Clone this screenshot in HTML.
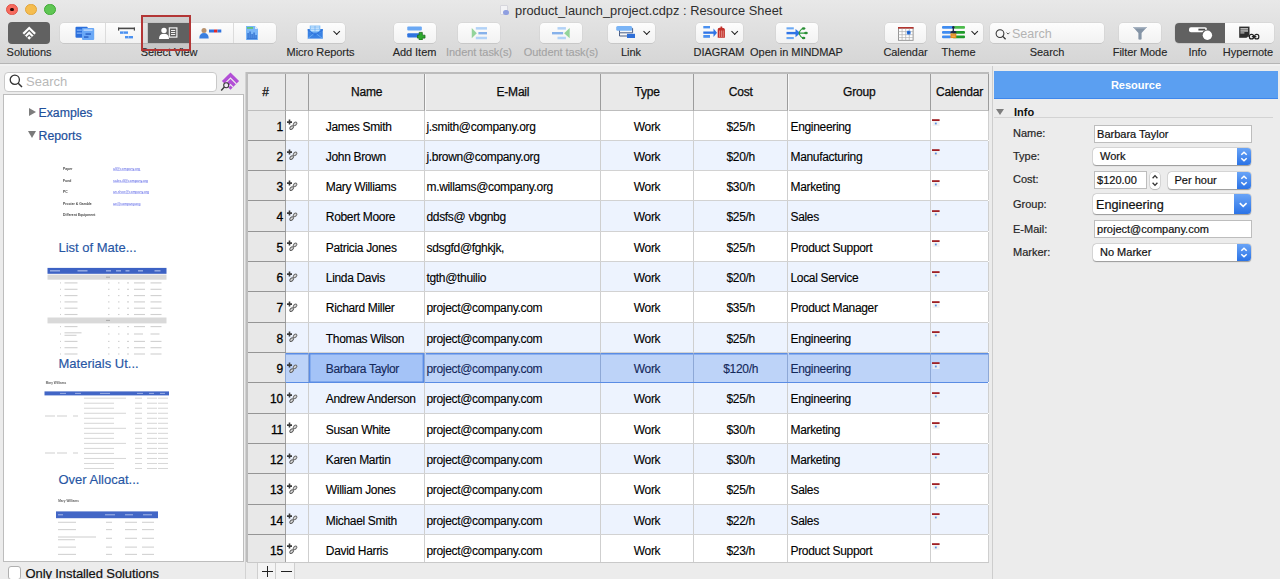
<!DOCTYPE html><html><head><meta charset="utf-8"><style>*{margin:0;padding:0;box-sizing:border-box}
html,body{width:1280px;height:579px;overflow:hidden;background:#ececec}
body{font-family:"Liberation Sans",sans-serif;color:#1e1e1e;position:relative}
.a{position:absolute}
#tb{z-index:5;left:0;top:0;width:1280px;height:63.7px;background:linear-gradient(#e8e8e8,#d6d6d6);border-bottom:1px solid #b5b5b5}
.tl{width:11.8px;height:11.8px;border-radius:50%;top:3.5px}
.title{left:515px;top:2.5px;font-size:12.8px;letter-spacing:0.03px;color:#2e2e2e;white-space:nowrap}
.btn{top:23px;height:20px;background:linear-gradient(#fdfdfd,#f2f2f2);border-radius:4px;box-shadow:0 0.5px 0 #b9b9b9,0 0 0 0.5px #cfcfcf}
.lbl{top:46.3px;font-size:11px;letter-spacing:-0.05px;color:#262626;-webkit-text-stroke:0.12px #262626;white-space:nowrap;transform:translateX(-50%)}
.dis{color:#a3a3a3;-webkit-text-stroke-color:#a3a3a3}
.chev{width:5.4px;height:5.4px;border-right:1.5px solid #222;border-bottom:1.5px solid #222;transform:rotate(45deg)}
.seg{border-left:1px solid #dcdcdc;top:0;height:20px}
/* sidebar */
#sb{left:0;top:63px;width:246px;height:516px;background:#ececec}
.srch{left:4.2px;top:8.6px;width:213px;height:20px;background:#fff;border:1px solid #c9c9c9;border-radius:4px}
.list{left:3px;top:31px;width:241px;height:468px;background:#fff;border:1px solid #bdbdbd}
.tree{font-size:12.3px;color:#22509c;-webkit-text-stroke:0.2px #22509c}
.rep{font-size:13px;color:#2756a4;white-space:nowrap;-webkit-text-stroke:0.15px #2756a4}
.t{position:absolute;height:1.2px;background:#777}
.tb2{position:absolute;height:1.2px;background:#5b72d8}
/* table */
#tbl{left:247px;top:72px;width:742px;height:492px;background:#fff;overflow:hidden}
.hd{-webkit-text-stroke:0.25px #000;top:0;height:38.6px;background:#e9e9e9;border-right:1.2px solid #9c9c9c;box-shadow:1px 0 0 #f8f8f8;border-bottom:1.5px solid #bdbdbd;font-size:12px;letter-spacing:-0.2px;text-align:center;line-height:40px;color:#111}
.row{left:0;width:742px;height:30.32px;border-bottom:1.2px solid #d2d2d2;font-size:12px;letter-spacing:-0.33px;color:#000;-webkit-text-stroke:0.12px #000}
.row.ev{background:#edf3fe}
.row.sel{background:#bdd3f8;border-bottom:1.4px solid #5a8ce4;color:#14285a;-webkit-text-stroke-color:#14285a}
.sel .c{box-shadow:inset 0 1.4px 0 #5a8ce4;border-right-color:#8ea8d6}
.sel .c.num{box-shadow:0 1.2px 0 #959595;color:#000;-webkit-text-stroke-color:#000}
.pre .c{border-bottom:0}
.c{top:0;height:100%;border-right:1.5px solid #cfcfcf;line-height:32.5px;white-space:nowrap}
.num{background:#e8e8e8;text-align:right;padding-right:2px;border-right:1.2px solid #a0a0a0;box-shadow:0 1.2px 0 #959595;-webkit-text-stroke:0.3px #000}
.ctr{text-align:center}
/* right panel */
#rp{left:992px;top:63px;width:288px;height:516px;background:#ececec;border-left:1px solid #cdcdcd}
.fl{font-size:11px;color:#262626;left:20px;white-space:nowrap;-webkit-text-stroke:0.2px #262626}
.fld{left:100.6px;width:158px;height:18px;background:#fff;border:1px solid #bdbdbd;font-size:11px;padding-left:2.5px;line-height:16px;color:#111;-webkit-text-stroke:0.2px #111}
.pop{left:100px;width:157.5px;height:17px;background:#fff;border-radius:3.5px;box-shadow:0 0.5px 1px #9a9a9a,0 0 0 0.5px #c9c9c9;font-size:11px;padding-left:7px;line-height:17px;color:#111;-webkit-text-stroke:0.2px #111}
.pbtn{right:0;top:0;width:14px;height:17px;background:linear-gradient(#69a4f7,#2b73e6);border-radius:0 3.5px 3.5px 0}
</style></head><body><div id="tb" class="a"><div class="a tl" style="left:6px;background:#f76b5e;border:0.6px solid #e0544a"></div><div class="a" style="left:10.3px;top:7.5px;width:3.3px;height:3.3px;border-radius:50%;background:#2a0606"></div><div class="a tl" style="left:25px;background:#f5bd4f;border:0.6px solid #e2a53a"></div><div class="a tl" style="left:44px;background:#5fc653;border:0.6px solid #3faa35"></div><div class="a" style="left:500px;top:5px;width:8px;height:10px;background:#f3f3f5;border:0.5px solid #d6d6dc;border-radius:1px"></div><div class="a" style="left:503px;top:9.5px;width:5.5px;height:5.5px;border-radius:50%;background:#8f9fe0"></div><div class="a title">product_launch_project.cdpz : Resource Sheet</div><div class="a" style="left:8px;top:22px;width:42px;height:22px;background:#616161;border-radius:4px"></div><svg class="a" style="left:22px;top:26px" width="15" height="15" viewBox="0 0 15 15"><defs><clipPath id="dm2"><path d="M7.2 0.4 L13.9 7.1 L7.2 13.8 L0.5 7.1 Z"/></clipPath></defs><g clip-path="url(#dm2)"><rect width="15" height="15" fill="#fff"/><path d="M-3 14.5 L7.2 4.3 L17.4 14.5" fill="none" stroke="#616161" stroke-width="1.3"/><path d="M-3 19.3 L7.2 9.1 L17.4 19.3" fill="none" stroke="#616161" stroke-width="1.3"/></g></svg><div class="a lbl" style="left:29px">Solutions</div><div class="a btn" style="left:60px;width:216px"><div class="a" style="left:87px;top:0;width:43px;height:20px;background:#6a6a6a"></div><div class="a seg" style="left:45px"></div><div class="a seg" style="left:87px"></div><div class="a seg" style="left:130px"></div><div class="a seg" style="left:173px"></div></div><svg class="a" style="left:75px;top:26px" width="20" height="15" viewBox="0 0 20 15"><rect x="0.5" y="0.8" width="12.2" height="11" rx="1" fill="#2b6fdc"/><rect x="1.8" y="3.5" width="5" height="1.3" fill="#7fb0f5"/><rect x="1.8" y="6.5" width="5" height="1.3" fill="#7fb0f5"/><rect x="7" y="2" width="12.2" height="12" rx="1" fill="#6aa8f6"/><rect x="8.5" y="3.5" width="9" height="1.2" fill="#cfe3ff"/><rect x="10.5" y="7.3" width="5.5" height="1.5" fill="#2b63c8"/><rect x="9" y="10.3" width="4.5" height="1.5" fill="#2b63c8"/></svg><svg class="a" style="left:117px;top:27px" width="19" height="13" viewBox="0 0 19 13"><rect x="1" y="0.6" width="17" height="1.6" fill="#4a4a4a"/><rect x="1" y="0.6" width="1.2" height="3" fill="#4a4a4a"/><rect x="16.8" y="0.6" width="1.2" height="3" fill="#4a4a4a"/><rect x="3" y="4.4" width="8" height="2.4" fill="#4a90f0"/><rect x="8" y="9" width="8" height="2.4" fill="#4a90f0"/><rect x="6" y="4.4" width="0.6" height="2.4" fill="#bcd8ff"/><rect x="11" y="9" width="0.6" height="2.4" fill="#bcd8ff"/></svg><svg class="a" style="left:159px;top:27px;z-index:3" width="20" height="13" viewBox="0 0 20 13"><circle cx="5" cy="3.4" r="2.7" fill="#fff"/><path d="M0 12 Q0 6.8 5 6.8 Q10 6.8 10 12 Z" fill="#fff"/><rect x="10.3" y="0.9" width="7.6" height="9.2" fill="none" stroke="#fff" stroke-width="1.1"/><rect x="12" y="3" width="4.2" height="0.9" fill="#fff"/><rect x="12" y="5" width="4.2" height="0.9" fill="#fff"/><rect x="12" y="7" width="4.2" height="0.9" fill="#fff"/></svg><svg class="a" style="left:199px;top:27px" width="23" height="12" viewBox="0 0 23 12"><circle cx="5" cy="3.4" r="2.5" fill="#b9936f"/><path d="M0.3 11.5 Q0.3 6 5 6 Q9.7 6 9.7 11.5 Z" fill="#3a7fe0"/><rect x="10" y="2.5" width="5" height="3" fill="#2f74e0"/><rect x="15" y="2.5" width="3.5" height="3" fill="#e02a2a"/><rect x="18.5" y="2.5" width="3.8" height="3" fill="#2f74e0"/></svg><svg class="a" style="left:246px;top:26px" width="12" height="14" viewBox="0 0 12 14"><path d="M0 0 H9 L12 3 V14 H0 Z" fill="#7ab6f8"/><path d="M9 0 V3 H12 Z" fill="#d6e8ff"/><rect x="1" y="1.2" width="6" height="1.5" fill="#5cc85c"/><path d="M1.5 12 V7 H2.6 V12 M3.5 12 V5.5 H4.6 V12 M5.5 12 V8 H6.6 V12 M7.5 12 V6.5 H8.6 V12 M9.5 12 V9 H10.6 V12" fill="#1e5fc6" stroke="none"/><rect x="1" y="12.3" width="10" height="0.9" fill="#1e5fc6"/></svg><div class="a lbl" style="left:169px">Select View</div><div class="a" style="left:141px;top:15px;width:50px;height:35.6px;border:2px solid #b33636;background:rgba(0,0,0,0.09);z-index:2"></div><div class="a btn" style="left:297px;width:48px"></div><svg class="a" style="left:307px;top:25px" width="16" height="15" viewBox="0 0 16 15"><rect x="0.75" y="4" width="15" height="9.6" fill="#3a82e4"/><rect x="2.75" y="0.5" width="10.6" height="7" fill="#8cc4f8"/><path d="M4 2 H12 M4 3.7 H12 M4 5.4 H12" stroke="#e8f4ff" stroke-width="0.7"/><path d="M8 1 V6.5" stroke="#5ea4f0" stroke-width="0.6"/><path d="M0.75 4 L8 9.3 L15.75 4 V5.6 L8 10.8 L0.75 5.6 Z" fill="#2f74dc"/><path d="M0.75 13.6 L6.5 9 M15.75 13.6 L9.6 9" stroke="#6fb0f5" stroke-width="0.8"/></svg><div class="a chev" style="left:333.5px;top:28.6px;border-width:1.7px"></div><div class="a lbl" style="left:320.5px">Micro Reports</div><div class="a btn" style="left:394px;width:42px"></div><svg class="a" style="left:406px;top:26px" width="20" height="14" viewBox="0 0 20 14"><rect x="1.25" y="0.5" width="14.6" height="4" rx="1" fill="#6aa8f4"/><rect x="1.25" y="7.25" width="13" height="4.3" rx="1" fill="#2f74e0"/><path d="M13.2 6.4 H16.3 V9.2 H19 V12.1 H16.3 V14 H13.2 V12.1 H11.5 V9.2 H13.2 Z" fill="#2eaa2e" stroke="#1d6b1d" stroke-width="0.8"/></svg><div class="a lbl" style="left:414.5px">Add Item</div><div class="a btn" style="left:458px;width:42px"></div><svg class="a" style="left:471px;top:27px" width="17" height="13" viewBox="0 0 17 13"><path d="M0.75 1.1 L5.8 6.2 L0.75 11.3 Z" fill="#93d49a"/><rect x="4.8" y="0.1" width="11.2" height="2.5" fill="#b2d2f7"/><rect x="7.4" y="5" width="8.6" height="2.4" fill="#86b1ea"/><rect x="4.8" y="9.75" width="11.2" height="2.5" fill="#b2d2f7"/></svg><div class="a lbl dis" style="left:479px">Indent task(s)</div><div class="a btn" style="left:540px;width:42px"></div><svg class="a" style="left:552px;top:27px" width="18" height="13" viewBox="0 0 18 13"><rect x="5.5" y="0.1" width="8.4" height="2.5" fill="#b2d2f7"/><rect x="0" y="5" width="11.1" height="2.4" fill="#86b1ea"/><rect x="5.5" y="9.75" width="8.4" height="2.5" fill="#b2d2f7"/><path d="M17.7 1 L12.1 6.2 L17.7 11.3 Z" fill="#93d49a"/></svg><div class="a lbl dis" style="left:561px">Outdent task(s)</div><div class="a btn" style="left:608px;width:47px"></div><svg class="a" style="left:616px;top:26px" width="20" height="13" viewBox="0 0 20 13"><rect x="0.2" y="0.1" width="16" height="4.6" rx="1.5" fill="#7ab4f6"/><path d="M16 2.5 H16.6 V6.8 H3.5 V10 H11" fill="none" stroke="#4a5e86" stroke-width="1"/><path d="M3.5 4.6 V6.8" stroke="#4a5e86" stroke-width="1"/><rect x="11" y="7.8" width="8" height="4.2" fill="#2f6fd8"/></svg><div class="a chev" style="left:644px;top:28.6px;border-width:1.7px"></div><div class="a lbl" style="left:631px">Link</div><div class="a btn" style="left:696px;width:47px"></div><svg class="a" style="left:703px;top:26px" width="22" height="12" viewBox="0 0 22 12"><rect x="0.3" y="0" width="6.7" height="2.4" fill="#4a90f0"/><rect x="0.3" y="5.5" width="11" height="2.3" fill="#2f74e6"/><rect x="0.3" y="9" width="6.7" height="2.8" fill="#4a90f0"/><path d="M10.5 2.4 L14 6.65 L10.5 10.9 Z" fill="#2f74e6"/><path d="M14.7 11.8 V3.5 Q14.7 1.8 16.5 1.8 H17.5 V0.6 H19.2 V1.8 Q21.9 1.8 21.9 3.5 V11.8 Z" fill="#c2302a"/><path d="M16.6 4.5 V11 M18.4 4.5 V11 M20.2 4.5 V11" stroke="#f3c6c0" stroke-width="0.6"/></svg><div class="a chev" style="left:732px;top:28.6px;border-width:1.7px"></div><div class="a lbl" style="left:719px">DIAGRAM</div><div class="a btn" style="left:776px;width:42px"></div><svg class="a" style="left:786px;top:27px" width="22" height="13" viewBox="0 0 22 13"><rect x="0.5" y="0.3" width="7.3" height="2.1" fill="#6aa8f4"/><rect x="0.5" y="4.9" width="10" height="2.4" fill="#2f74e6"/><rect x="0.5" y="10" width="7.3" height="2.1" fill="#6aa8f4"/><path d="M9.5 2 L14.4 6.1 L9.5 10.2 Z" fill="#2f74e6"/><path d="M13 6.1 Q14.5 1.8 17.5 1.5 M13 6.1 H19.9 M13 6.1 Q14.5 10.6 17.5 10.9" fill="none" stroke="#2a9a3a" stroke-width="1.1"/><ellipse cx="17.6" cy="1.5" rx="1.8" ry="1.25" fill="#2a8f35"/><ellipse cx="20" cy="6.1" rx="1.8" ry="1.25" fill="#2a8f35"/><ellipse cx="17.6" cy="10.9" rx="1.8" ry="1.25" fill="#2a8f35"/></svg><div class="a lbl" style="left:796.5px">Open in MINDMAP</div><div class="a btn" style="left:885px;width:41px"></div><svg class="a" style="left:897.5px;top:26.5px" width="16" height="14" viewBox="0 0 16 14"><rect x="0.5" y="1" width="14.6" height="12.3" fill="#fff" stroke="#8c8c8c" stroke-width="0.9"/><rect x="0" y="0" width="15.6" height="1.6" fill="#b3342e"/><path d="M0.5 4.6 H15 M0.5 7.7 H15 M0.5 10.6 H15 M4.1 1.6 V13.3 M7.7 1.6 V13.3 M11.3 1.6 V13.3" stroke="#b0b0b0" stroke-width="0.7"/><rect x="8.9" y="3.8" width="3.6" height="3.6" fill="#2f7be6"/><path d="M8.9 5.6 H12.5 M10.7 3.8 V7.4" stroke="#1b4fa8" stroke-width="0.5"/></svg><div class="a lbl" style="left:905.5px">Calendar</div><div class="a btn" style="left:936px;width:47px"></div><svg class="a" style="left:942px;top:26px" width="23" height="13" viewBox="0 0 23 13"><rect x="0" y="0.1" width="11.5" height="2.7" rx="1" fill="#3f8cf0"/><rect x="11" y="0.1" width="12" height="2.7" rx="1" fill="#4cbb4c"/><rect x="0" y="5" width="9" height="2.7" rx="1" fill="#3f8cf0"/><rect x="10.5" y="5" width="12.5" height="2.7" rx="1" fill="#1e9a2a"/><rect x="0" y="9.5" width="9" height="2.7" rx="1" fill="#3f8cf0"/><rect x="10.5" y="9.5" width="12.5" height="2.7" rx="1" fill="#1e9a2a"/><circle cx="11.3" cy="1.2" r="1.2" fill="#1c2a4a"/><path d="M11.3 1 V5" stroke="#1c2a4a" stroke-width="1.3"/><path d="M8.5 7.6 V5.6 Q11.3 3.8 14.3 5.6 V7.6 Z" fill="#1c2a4a"/><rect x="8.5" y="7.5" width="5.8" height="4.6" fill="#e38a18"/><path d="M9.5 9 H13.3 M9.5 10.6 H13.3" stroke="#f7c98a" stroke-width="0.5"/></svg><div class="a chev" style="left:971.5px;top:28.6px;border-width:1.8px"></div><div class="a lbl" style="left:958.5px">Theme</div><div class="a btn" style="left:990px;width:114px"></div><svg class="a" style="left:995px;top:29px" width="17" height="11" viewBox="0 0 17 11"><circle cx="5" cy="4.6" r="3.9" fill="none" stroke="#333" stroke-width="1.05"/><path d="M7.8 7.4 L10.6 10.3" stroke="#333" stroke-width="1.3"/><path d="M11.6 3.6 L13.1 5.1 L14.6 3.6" fill="none" stroke="#444" stroke-width="0.9"/></svg><div class="a" style="left:1012px;top:27px;font-size:12.5px;color:#b3b3b3">Search</div><div class="a lbl" style="left:1047px">Search</div><div class="a btn" style="left:1119px;width:42px"></div><svg class="a" style="left:1133px;top:27px" width="14" height="13" viewBox="0 0 14 13"><path d="M0 0 H14 L8.6 6 V12.3 Q7 13 5.4 12.3 V6 Z" fill="#8494a6"/><path d="M0 0 H14 L12.6 1.6 H1.4 Z" fill="#a8b4c2"/></svg><div class="a lbl" style="left:1140px">Filter Mode</div><div class="a btn" style="left:1175px;width:99px"><div class="a" style="left:0;top:0;width:50px;height:20px;background:#616161;border-radius:4px 0 0 4px"></div></div><svg class="a" style="left:1189px;top:26px" width="25" height="15" viewBox="0 0 25 15"><rect x="0" y="1.3" width="18" height="4.9" rx="2" fill="#fff"/><rect x="9.4" y="2.7" width="6.8" height="1.8" fill="#4a4a4a"/><circle cx="18.4" cy="9.2" r="5.8" fill="#616161"/><circle cx="18.4" cy="9.2" r="4.7" fill="#fff"/></svg><svg class="a" style="left:1238px;top:26px" width="23" height="15" viewBox="0 0 23 15"><rect x="1.2" y="0.6" width="10.3" height="11.2" fill="#2e2e2e"/><rect x="2.4" y="2.2" width="7.6" height="1.3" fill="#d8d8d8"/><rect x="2.4" y="4.3" width="7.6" height="1.3" fill="#d8d8d8"/><rect x="2.4" y="6.3" width="4" height="1.2" fill="#bbb"/><path d="M8.2 12.2 L12 8.4 V12.2 Z" fill="#fff"/><path d="M9.5 11.2 L11.2 9.5" stroke="#2e2e2e" stroke-width="1"/><rect x="11.4" y="8.4" width="4.2" height="4.5" rx="2" fill="none" stroke="#222" stroke-width="1.2"/><rect x="16.6" y="8.4" width="4.2" height="4.5" rx="2" fill="none" stroke="#222" stroke-width="1.2"/><path d="M13.8 10.65 H18.4" stroke="#222" stroke-width="1.2"/></svg><div class="a lbl" style="left:1197.5px">Info</div><div class="a lbl" style="left:1248px">Hypernote</div></div><div id="sb" class="a"><div class="a srch"></div><svg class="a" style="left:9px;top:11px" width="14" height="14" viewBox="0 0 14 14"><circle cx="5.8" cy="5.8" r="4.6" fill="none" stroke="#333" stroke-width="1.3"/><path d="M9.2 9.2 L13 13" stroke="#333" stroke-width="1.5"/></svg><div class="a" style="left:26px;top:10.5px;font-size:13px;color:#b8b8b8">Search</div><svg class="a" style="left:216px;top:5px" width="30" height="28" viewBox="0 0 30 28"><defs><clipPath id="dm"><path d="M14.5 4.6 L23.1 13.1 L14.5 21.7 L5.9 13.1 Z"/></clipPath></defs><g clip-path="url(#dm)"><rect x="0" y="0" width="30" height="28" fill="#b24fd6"/><path d="M2 22.65 L14.5 10.15 L27 22.65" fill="none" stroke="#ececec" stroke-width="1.2"/><path d="M2 29.2 L14.5 16.7 L27 29.2" fill="none" stroke="#ececec" stroke-width="1.2"/></g><circle cx="10.2" cy="17.2" r="2.5" fill="#f4eaf8" stroke="#3a3a3a" stroke-width="1.1"/><path d="M8.4 19.1 L5.2 22.4" stroke="#3a3a3a" stroke-width="1.4"/></svg><div class="a list"><div class="a" style="left:24.5px;top:12.5px;width:0;height:0;border-left:7px solid #7d7d7d;border-top:4.5px solid transparent;border-bottom:4.5px solid transparent"></div><div class="a tree" style="left:34.5px;top:10.6px">Examples</div><div class="a" style="left:24px;top:36px;width:0;height:0;border-top:7px solid #7a7a7a;border-left:4.5px solid transparent;border-right:4.5px solid transparent"></div><div class="a tree" style="left:34.5px;top:33.6px">Reports</div><div class="a rep" style="left:54.5px;top:144.5px">List of Mate...</div><div class="a rep" style="left:54.5px;top:260.5px">Materials Ut...</div><div class="a rep" style="left:54.5px;top:376.5px">Over Allocat...</div></div><svg class="a" style="left:0;top:-63px;filter:blur(0.2px)" width="246" height="579" viewBox="0 0 246 579"><text x="63.00" y="170.22" font-size="3.4" font-weight="bold" fill="#222" opacity="0.85">Paper</text><text x="113.00" y="170.26" font-size="3.5" font-weight="normal" fill="#3a46e0" opacity="0.85">all@company.org</text><rect x="113.00" y="170.50" width="27.50" height="0.45" fill="#6a74ee" opacity="0.8"/><text x="63.00" y="181.62" font-size="3.4" font-weight="bold" fill="#222" opacity="0.85">Fund</text><text x="113.00" y="181.66" font-size="3.5" font-weight="normal" fill="#3a46e0" opacity="0.85">sales.ill@company.org</text><rect x="113.00" y="181.90" width="34.50" height="0.45" fill="#6a74ee" opacity="0.8"/><text x="63.00" y="193.02" font-size="3.4" font-weight="bold" fill="#222" opacity="0.85">PC</text><text x="113.00" y="193.06" font-size="3.5" font-weight="normal" fill="#3a46e0" opacity="0.85">an.shoe@company.org</text><rect x="113.00" y="193.30" width="36.00" height="0.45" fill="#6a74ee" opacity="0.8"/><text x="63.00" y="204.62" font-size="3.4" font-weight="bold" fill="#222" opacity="0.85">Procter &amp; Gamble</text><text x="113.00" y="204.66" font-size="3.5" font-weight="normal" fill="#3a46e0" opacity="0.85">ae@company.org</text><rect x="113.00" y="204.90" width="27.70" height="0.45" fill="#6a74ee" opacity="0.8"/><text x="63.00" y="215.82" font-size="3.4" font-weight="bold" fill="#222" opacity="0.85">Different Equipment</text><rect x="47.50" y="267.90" width="119.00" height="5.90" fill="#3d62c4" opacity="1"/><rect x="50.00" y="270.30" width="10.00" height="1.10" fill="#e8eeff" opacity="0.7"/><rect x="77.50" y="270.30" width="10.00" height="1.10" fill="#e8eeff" opacity="0.7"/><rect x="106.00" y="270.30" width="5.00" height="1.10" fill="#e8eeff" opacity="0.7"/><rect x="116.00" y="270.30" width="5.00" height="1.10" fill="#e8eeff" opacity="0.7"/><rect x="125.50" y="270.30" width="4.00" height="1.10" fill="#e8eeff" opacity="0.7"/><rect x="138.00" y="270.30" width="5.00" height="1.10" fill="#e8eeff" opacity="0.7"/><rect x="154.50" y="270.30" width="6.00" height="1.10" fill="#e8eeff" opacity="0.7"/><rect x="47.50" y="274.60" width="119.00" height="5.10" fill="#d9d9d9" opacity="1"/><rect x="106.00" y="276.70" width="4.00" height="1.00" fill="#777" opacity="0.5"/><rect x="60.00" y="282.35" width="1.00" height="1.10" fill="#8a8a8a" opacity="0.4"/><rect x="64.50" y="282.35" width="13.00" height="1.10" fill="#8a8a8a" opacity="0.4"/><rect x="108.00" y="282.35" width="1.50" height="1.10" fill="#8a8a8a" opacity="0.4"/><rect x="118.00" y="282.35" width="1.50" height="1.10" fill="#8a8a8a" opacity="0.4"/><rect x="127.00" y="282.35" width="2.00" height="1.10" fill="#8a8a8a" opacity="0.4"/><rect x="134.00" y="282.35" width="11.00" height="1.10" fill="#8a8a8a" opacity="0.4"/><rect x="150.50" y="282.35" width="11.00" height="1.10" fill="#8a8a8a" opacity="0.4"/><rect x="60.00" y="288.75" width="1.00" height="1.10" fill="#8a8a8a" opacity="0.4"/><rect x="64.50" y="288.75" width="13.00" height="1.10" fill="#8a8a8a" opacity="0.4"/><rect x="108.00" y="288.75" width="1.50" height="1.10" fill="#8a8a8a" opacity="0.4"/><rect x="118.00" y="288.75" width="1.50" height="1.10" fill="#8a8a8a" opacity="0.4"/><rect x="127.00" y="288.75" width="2.00" height="1.10" fill="#8a8a8a" opacity="0.4"/><rect x="134.00" y="288.75" width="11.00" height="1.10" fill="#8a8a8a" opacity="0.4"/><rect x="150.50" y="288.75" width="11.00" height="1.10" fill="#8a8a8a" opacity="0.4"/><rect x="60.00" y="295.05" width="1.00" height="1.10" fill="#8a8a8a" opacity="0.4"/><rect x="64.50" y="295.05" width="13.00" height="1.10" fill="#8a8a8a" opacity="0.4"/><rect x="108.00" y="295.05" width="1.50" height="1.10" fill="#8a8a8a" opacity="0.4"/><rect x="118.00" y="295.05" width="1.50" height="1.10" fill="#8a8a8a" opacity="0.4"/><rect x="127.00" y="295.05" width="2.00" height="1.10" fill="#8a8a8a" opacity="0.4"/><rect x="134.00" y="295.05" width="11.00" height="1.10" fill="#8a8a8a" opacity="0.4"/><rect x="150.50" y="295.05" width="11.00" height="1.10" fill="#8a8a8a" opacity="0.4"/><rect x="60.00" y="301.35" width="1.00" height="1.10" fill="#8a8a8a" opacity="0.4"/><rect x="64.50" y="301.35" width="13.00" height="1.10" fill="#8a8a8a" opacity="0.4"/><rect x="108.00" y="301.35" width="1.50" height="1.10" fill="#8a8a8a" opacity="0.4"/><rect x="118.00" y="301.35" width="1.50" height="1.10" fill="#8a8a8a" opacity="0.4"/><rect x="127.00" y="301.35" width="2.00" height="1.10" fill="#8a8a8a" opacity="0.4"/><rect x="134.00" y="301.35" width="11.00" height="1.10" fill="#8a8a8a" opacity="0.4"/><rect x="150.50" y="301.35" width="11.00" height="1.10" fill="#8a8a8a" opacity="0.4"/><rect x="60.00" y="307.65" width="1.00" height="1.10" fill="#8a8a8a" opacity="0.4"/><rect x="64.50" y="307.65" width="13.00" height="1.10" fill="#8a8a8a" opacity="0.4"/><rect x="108.00" y="307.65" width="1.50" height="1.10" fill="#8a8a8a" opacity="0.4"/><rect x="118.00" y="307.65" width="1.50" height="1.10" fill="#8a8a8a" opacity="0.4"/><rect x="127.00" y="307.65" width="2.00" height="1.10" fill="#8a8a8a" opacity="0.4"/><rect x="134.00" y="307.65" width="11.00" height="1.10" fill="#8a8a8a" opacity="0.4"/><rect x="150.50" y="307.65" width="11.00" height="1.10" fill="#8a8a8a" opacity="0.4"/><rect x="60.00" y="313.95" width="1.00" height="1.10" fill="#8a8a8a" opacity="0.4"/><rect x="64.50" y="313.95" width="13.00" height="1.10" fill="#8a8a8a" opacity="0.4"/><rect x="108.00" y="313.95" width="1.50" height="1.10" fill="#8a8a8a" opacity="0.4"/><rect x="118.00" y="313.95" width="1.50" height="1.10" fill="#8a8a8a" opacity="0.4"/><rect x="127.00" y="313.95" width="2.00" height="1.10" fill="#8a8a8a" opacity="0.4"/><rect x="134.00" y="313.95" width="11.00" height="1.10" fill="#8a8a8a" opacity="0.4"/><rect x="150.50" y="313.95" width="11.00" height="1.10" fill="#8a8a8a" opacity="0.4"/><rect x="60.00" y="326.05" width="1.00" height="1.10" fill="#8a8a8a" opacity="0.4"/><rect x="64.50" y="326.05" width="13.00" height="1.10" fill="#8a8a8a" opacity="0.4"/><rect x="108.00" y="326.05" width="1.50" height="1.10" fill="#8a8a8a" opacity="0.4"/><rect x="118.00" y="326.05" width="1.50" height="1.10" fill="#8a8a8a" opacity="0.4"/><rect x="127.00" y="326.05" width="2.00" height="1.10" fill="#8a8a8a" opacity="0.4"/><rect x="134.00" y="326.05" width="11.00" height="1.10" fill="#8a8a8a" opacity="0.4"/><rect x="150.50" y="326.05" width="11.00" height="1.10" fill="#8a8a8a" opacity="0.4"/><rect x="60.00" y="340.85" width="1.00" height="1.10" fill="#8a8a8a" opacity="0.4"/><rect x="64.50" y="340.85" width="13.00" height="1.10" fill="#8a8a8a" opacity="0.4"/><rect x="108.00" y="340.85" width="1.50" height="1.10" fill="#8a8a8a" opacity="0.4"/><rect x="118.00" y="340.85" width="1.50" height="1.10" fill="#8a8a8a" opacity="0.4"/><rect x="127.00" y="340.85" width="2.00" height="1.10" fill="#8a8a8a" opacity="0.4"/><rect x="134.00" y="340.85" width="11.00" height="1.10" fill="#8a8a8a" opacity="0.4"/><rect x="150.50" y="340.85" width="11.00" height="1.10" fill="#8a8a8a" opacity="0.4"/><rect x="60.00" y="347.15" width="1.00" height="1.10" fill="#8a8a8a" opacity="0.4"/><rect x="64.50" y="347.15" width="13.00" height="1.10" fill="#8a8a8a" opacity="0.4"/><rect x="108.00" y="347.15" width="1.50" height="1.10" fill="#8a8a8a" opacity="0.4"/><rect x="118.00" y="347.15" width="1.50" height="1.10" fill="#8a8a8a" opacity="0.4"/><rect x="127.00" y="347.15" width="2.00" height="1.10" fill="#8a8a8a" opacity="0.4"/><rect x="134.00" y="347.15" width="11.00" height="1.10" fill="#8a8a8a" opacity="0.4"/><rect x="150.50" y="347.15" width="11.00" height="1.10" fill="#8a8a8a" opacity="0.4"/><rect x="60.00" y="353.45" width="1.00" height="1.10" fill="#8a8a8a" opacity="0.4"/><rect x="64.50" y="353.45" width="13.00" height="1.10" fill="#8a8a8a" opacity="0.4"/><rect x="108.00" y="353.45" width="1.50" height="1.10" fill="#8a8a8a" opacity="0.4"/><rect x="118.00" y="353.45" width="1.50" height="1.10" fill="#8a8a8a" opacity="0.4"/><rect x="127.00" y="353.45" width="2.00" height="1.10" fill="#8a8a8a" opacity="0.4"/><rect x="134.00" y="353.45" width="11.00" height="1.10" fill="#8a8a8a" opacity="0.4"/><rect x="150.50" y="353.45" width="11.00" height="1.10" fill="#8a8a8a" opacity="0.4"/><rect x="64.50" y="332.25" width="17.00" height="1.10" fill="#8a8a8a" opacity="0.4"/><rect x="64.50" y="334.75" width="12.00" height="1.10" fill="#8a8a8a" opacity="0.4"/><rect x="60.00" y="333.45" width="1.00" height="1.10" fill="#8a8a8a" opacity="0.4"/><rect x="108.00" y="333.45" width="1.50" height="1.10" fill="#8a8a8a" opacity="0.4"/><rect x="118.00" y="333.45" width="1.50" height="1.10" fill="#8a8a8a" opacity="0.4"/><rect x="127.00" y="333.45" width="2.00" height="1.10" fill="#8a8a8a" opacity="0.4"/><rect x="134.00" y="333.45" width="9.00" height="1.10" fill="#8a8a8a" opacity="0.4"/><rect x="150.50" y="333.45" width="9.00" height="1.10" fill="#8a8a8a" opacity="0.4"/><rect x="47.50" y="317.50" width="119.00" height="5.90" fill="#d9d9d9" opacity="1"/><rect x="106.00" y="319.90" width="4.00" height="1.00" fill="#777" opacity="0.5"/><text x="45.70" y="384.22" font-size="3.1" font-weight="bold" fill="#333" opacity="0.8">Mary Williams</text><rect x="44.50" y="391.40" width="124.50" height="4.00" fill="#4266c6" opacity="1"/><rect x="60.00" y="392.90" width="6.00" height="0.90" fill="#e8eeff" opacity="0.6"/><rect x="75.00" y="392.90" width="6.00" height="0.90" fill="#e8eeff" opacity="0.6"/><rect x="100.00" y="392.90" width="10.00" height="0.90" fill="#e8eeff" opacity="0.6"/><rect x="137.00" y="392.90" width="6.00" height="0.90" fill="#e8eeff" opacity="0.6"/><rect x="149.00" y="392.90" width="5.00" height="0.90" fill="#e8eeff" opacity="0.6"/><rect x="160.00" y="392.90" width="5.00" height="0.90" fill="#e8eeff" opacity="0.6"/><rect x="84.00" y="397.70" width="42.00" height="1.00" fill="#8a8a8a" opacity="0.35"/><rect x="135.00" y="397.70" width="7.00" height="1.00" fill="#8a8a8a" opacity="0.35"/><rect x="147.00" y="397.70" width="10.00" height="1.00" fill="#8a8a8a" opacity="0.35"/><rect x="158.00" y="397.70" width="10.00" height="1.00" fill="#8a8a8a" opacity="0.35"/><rect x="84.00" y="402.72" width="30.00" height="1.00" fill="#8a8a8a" opacity="0.35"/><rect x="135.00" y="402.72" width="7.00" height="1.00" fill="#8a8a8a" opacity="0.35"/><rect x="147.00" y="402.72" width="10.00" height="1.00" fill="#8a8a8a" opacity="0.35"/><rect x="158.00" y="402.72" width="10.00" height="1.00" fill="#8a8a8a" opacity="0.35"/><rect x="84.00" y="407.74" width="30.00" height="1.00" fill="#8a8a8a" opacity="0.35"/><rect x="135.00" y="407.74" width="7.00" height="1.00" fill="#8a8a8a" opacity="0.35"/><rect x="147.00" y="407.74" width="10.00" height="1.00" fill="#8a8a8a" opacity="0.35"/><rect x="158.00" y="407.74" width="10.00" height="1.00" fill="#8a8a8a" opacity="0.35"/><rect x="84.00" y="412.76" width="42.00" height="1.00" fill="#8a8a8a" opacity="0.35"/><rect x="135.00" y="412.76" width="7.00" height="1.00" fill="#8a8a8a" opacity="0.35"/><rect x="147.00" y="412.76" width="10.00" height="1.00" fill="#8a8a8a" opacity="0.35"/><rect x="158.00" y="412.76" width="10.00" height="1.00" fill="#8a8a8a" opacity="0.35"/><rect x="84.00" y="417.78" width="30.00" height="1.00" fill="#8a8a8a" opacity="0.35"/><rect x="135.00" y="417.78" width="7.00" height="1.00" fill="#8a8a8a" opacity="0.35"/><rect x="147.00" y="417.78" width="10.00" height="1.00" fill="#8a8a8a" opacity="0.35"/><rect x="158.00" y="417.78" width="10.00" height="1.00" fill="#8a8a8a" opacity="0.35"/><rect x="84.00" y="422.80" width="30.00" height="1.00" fill="#8a8a8a" opacity="0.35"/><rect x="135.00" y="422.80" width="7.00" height="1.00" fill="#8a8a8a" opacity="0.35"/><rect x="147.00" y="422.80" width="10.00" height="1.00" fill="#8a8a8a" opacity="0.35"/><rect x="158.00" y="422.80" width="10.00" height="1.00" fill="#8a8a8a" opacity="0.35"/><rect x="84.00" y="427.82" width="42.00" height="1.00" fill="#8a8a8a" opacity="0.35"/><rect x="135.00" y="427.82" width="7.00" height="1.00" fill="#8a8a8a" opacity="0.35"/><rect x="147.00" y="427.82" width="10.00" height="1.00" fill="#8a8a8a" opacity="0.35"/><rect x="158.00" y="427.82" width="10.00" height="1.00" fill="#8a8a8a" opacity="0.35"/><rect x="84.00" y="432.84" width="30.00" height="1.00" fill="#8a8a8a" opacity="0.35"/><rect x="135.00" y="432.84" width="7.00" height="1.00" fill="#8a8a8a" opacity="0.35"/><rect x="147.00" y="432.84" width="10.00" height="1.00" fill="#8a8a8a" opacity="0.35"/><rect x="158.00" y="432.84" width="10.00" height="1.00" fill="#8a8a8a" opacity="0.35"/><rect x="84.00" y="437.86" width="30.00" height="1.00" fill="#8a8a8a" opacity="0.35"/><rect x="135.00" y="437.86" width="7.00" height="1.00" fill="#8a8a8a" opacity="0.35"/><rect x="147.00" y="437.86" width="10.00" height="1.00" fill="#8a8a8a" opacity="0.35"/><rect x="158.00" y="437.86" width="10.00" height="1.00" fill="#8a8a8a" opacity="0.35"/><rect x="84.00" y="442.88" width="42.00" height="1.00" fill="#8a8a8a" opacity="0.35"/><rect x="135.00" y="442.88" width="7.00" height="1.00" fill="#8a8a8a" opacity="0.35"/><rect x="147.00" y="442.88" width="10.00" height="1.00" fill="#8a8a8a" opacity="0.35"/><rect x="158.00" y="442.88" width="10.00" height="1.00" fill="#8a8a8a" opacity="0.35"/><rect x="84.00" y="447.90" width="30.00" height="1.00" fill="#8a8a8a" opacity="0.35"/><rect x="135.00" y="447.90" width="7.00" height="1.00" fill="#8a8a8a" opacity="0.35"/><rect x="147.00" y="447.90" width="10.00" height="1.00" fill="#8a8a8a" opacity="0.35"/><rect x="158.00" y="447.90" width="10.00" height="1.00" fill="#8a8a8a" opacity="0.35"/><rect x="84.00" y="452.92" width="30.00" height="1.00" fill="#8a8a8a" opacity="0.35"/><rect x="135.00" y="452.92" width="7.00" height="1.00" fill="#8a8a8a" opacity="0.35"/><rect x="147.00" y="452.92" width="10.00" height="1.00" fill="#8a8a8a" opacity="0.35"/><rect x="158.00" y="452.92" width="10.00" height="1.00" fill="#8a8a8a" opacity="0.35"/><rect x="84.00" y="457.94" width="42.00" height="1.00" fill="#8a8a8a" opacity="0.35"/><rect x="135.00" y="457.94" width="7.00" height="1.00" fill="#8a8a8a" opacity="0.35"/><rect x="147.00" y="457.94" width="10.00" height="1.00" fill="#8a8a8a" opacity="0.35"/><rect x="158.00" y="457.94" width="10.00" height="1.00" fill="#8a8a8a" opacity="0.35"/><rect x="84.00" y="462.96" width="30.00" height="1.00" fill="#8a8a8a" opacity="0.35"/><rect x="135.00" y="462.96" width="7.00" height="1.00" fill="#8a8a8a" opacity="0.35"/><rect x="147.00" y="462.96" width="10.00" height="1.00" fill="#8a8a8a" opacity="0.35"/><rect x="158.00" y="462.96" width="10.00" height="1.00" fill="#8a8a8a" opacity="0.35"/><rect x="84.00" y="467.98" width="30.00" height="1.00" fill="#8a8a8a" opacity="0.35"/><rect x="135.00" y="467.98" width="7.00" height="1.00" fill="#8a8a8a" opacity="0.35"/><rect x="147.00" y="467.98" width="10.00" height="1.00" fill="#8a8a8a" opacity="0.35"/><rect x="158.00" y="467.98" width="10.00" height="1.00" fill="#8a8a8a" opacity="0.35"/><rect x="45.00" y="415.50" width="10.00" height="1.00" fill="#8a8a8a" opacity="0.4"/><rect x="57.00" y="415.50" width="10.00" height="1.00" fill="#8a8a8a" opacity="0.4"/><rect x="73.00" y="415.50" width="5.00" height="1.00" fill="#8a8a8a" opacity="0.4"/><rect x="45.00" y="452.50" width="10.00" height="1.00" fill="#8a8a8a" opacity="0.4"/><rect x="57.00" y="452.50" width="10.00" height="1.00" fill="#8a8a8a" opacity="0.4"/><rect x="73.00" y="452.50" width="5.00" height="1.00" fill="#8a8a8a" opacity="0.4"/><text x="58.30" y="501.52" font-size="3.1" font-weight="bold" fill="#333" opacity="0.8">Mary Williams</text><rect x="56.00" y="511.40" width="102.00" height="6.80" fill="#4266c6" opacity="1"/><rect x="58.00" y="514.30" width="5.00" height="1.00" fill="#e8eeff" opacity="0.6"/><rect x="105.00" y="514.30" width="10.00" height="1.00" fill="#e8eeff" opacity="0.6"/><rect x="125.00" y="514.30" width="8.00" height="1.00" fill="#e8eeff" opacity="0.6"/><rect x="143.00" y="514.30" width="9.00" height="1.00" fill="#e8eeff" opacity="0.6"/><rect x="58.00" y="521.75" width="18.00" height="1.10" fill="#8a8a8a" opacity="0.38"/><rect x="106.00" y="521.75" width="6.00" height="1.10" fill="#8a8a8a" opacity="0.38"/><rect x="125.00" y="521.75" width="12.00" height="1.10" fill="#8a8a8a" opacity="0.38"/><rect x="142.00" y="521.75" width="12.00" height="1.10" fill="#8a8a8a" opacity="0.38"/><rect x="58.00" y="529.05" width="18.00" height="1.10" fill="#8a8a8a" opacity="0.38"/><rect x="106.00" y="529.05" width="6.00" height="1.10" fill="#8a8a8a" opacity="0.38"/><rect x="125.00" y="529.05" width="12.00" height="1.10" fill="#8a8a8a" opacity="0.38"/><rect x="142.00" y="529.05" width="12.00" height="1.10" fill="#8a8a8a" opacity="0.38"/><rect x="58.00" y="546.55" width="18.00" height="1.10" fill="#8a8a8a" opacity="0.38"/><rect x="106.00" y="546.55" width="6.00" height="1.10" fill="#8a8a8a" opacity="0.38"/><rect x="125.00" y="546.55" width="12.00" height="1.10" fill="#8a8a8a" opacity="0.38"/><rect x="142.00" y="546.55" width="12.00" height="1.10" fill="#8a8a8a" opacity="0.38"/><rect x="58.00" y="553.85" width="18.00" height="1.10" fill="#8a8a8a" opacity="0.38"/><rect x="106.00" y="553.85" width="6.00" height="1.10" fill="#8a8a8a" opacity="0.38"/><rect x="125.00" y="553.85" width="12.00" height="1.10" fill="#8a8a8a" opacity="0.38"/><rect x="142.00" y="553.85" width="12.00" height="1.10" fill="#8a8a8a" opacity="0.38"/><rect x="58.00" y="536.45" width="38.00" height="1.10" fill="#8a8a8a" opacity="0.38"/><rect x="58.00" y="539.15" width="17.00" height="1.10" fill="#8a8a8a" opacity="0.38"/><rect x="106.00" y="537.75" width="6.00" height="1.10" fill="#8a8a8a" opacity="0.38"/><rect x="125.00" y="537.75" width="12.00" height="1.10" fill="#8a8a8a" opacity="0.38"/><rect x="142.00" y="537.75" width="12.00" height="1.10" fill="#8a8a8a" opacity="0.38"/></svg><div class="a" style="left:8px;top:503px;width:13px;height:14px;background:#fff;border:1px solid #b0b0b0;border-radius:3px"></div><div class="a" style="left:25.5px;top:502.5px;font-size:13px;letter-spacing:-0.1px;color:#111;-webkit-text-stroke:0.2px #111;white-space:nowrap">Only Installed Solutions</div></div><div class="a" style="left:0;top:63.7px;width:1280px;height:2.3px;background:#f1f1f1;z-index:4"></div><div id="tbl" class="a" style="left:246px;top:72px;width:743px;height:490px"><div class="a" style="left:0;top:0;width:743px;height:1.5px;background:#bcbcbc;z-index:3"></div><div class="a" style="left:-0.5px;top:0;width:2px;height:490px;background:#bdbdbd;z-index:3"></div><div class="a hd" style="left:0.0px;width:39.8px">#</div><div class="a hd" style="left:39.8px;width:23.0px"></div><div class="a hd" style="left:62.8px;width:116.7px">Name</div><div class="a hd" style="left:179.5px;width:175.8px">E-Mail</div><div class="a hd" style="left:355.3px;width:92.5px">Type</div><div class="a hd" style="left:447.8px;width:94.7px">Cost</div><div class="a hd" style="left:542.5px;width:142.5px">Group</div><div class="a hd" style="left:685.0px;width:58.0px">Calendar</div><div class="a row" style="top:38.50px"><div class="a c num" style="left:0.0px;width:39.8px">1</div><div class="a c " style="left:39.8px;width:23.0px"><svg class="a" style="left:-1.5px;top:3.5px" width="20" height="20" viewBox="0 0 20 20"><path d="M3 8.1 H8 M5.5 5.6 V10.6" stroke="#3a3a3a" stroke-width="1.6"/><ellipse cx="11.05" cy="9.9" rx="2.2" ry="1.35" transform="rotate(-45 11.05 9.9)" fill="#ddd" stroke="#6a6a6a" stroke-width="1"/><ellipse cx="7.6" cy="13.6" rx="2.2" ry="1.35" transform="rotate(-45 7.6 13.6)" fill="#ddd" stroke="#5a5a5a" stroke-width="1"/></svg></div><div class="a c " style="left:62.8px;width:116.7px"><span style="padding-left:17px">James Smith</span></div><div class="a c " style="left:179.5px;width:175.8px"><span style="padding-left:1px">j.smith@company.org</span></div><div class="a c ctr" style="left:355.3px;width:92.5px">Work</div><div class="a c ctr" style="left:447.8px;width:94.7px">$25/h</div><div class="a c " style="left:542.5px;width:142.5px"><span style="padding-left:2px">Engineering</span></div><div class="a c " style="left:685.0px;width:58.0px"><svg class="a" style="left:0.6px;top:8.5px" width="9" height="8" viewBox="0 0 9 8"><rect x="0.5" y="2" width="7" height="5" fill="#f0f0f0" opacity="0.8"/><rect x="0" y="0.2" width="7.6" height="1.8" fill="#9e1f24"/><rect x="2.9" y="3.6" width="1.8" height="1.8" fill="#5b8fe0"/></svg></div></div><div class="a row ev" style="top:68.82px"><div class="a c num" style="left:0.0px;width:39.8px">2</div><div class="a c " style="left:39.8px;width:23.0px"><svg class="a" style="left:-1.5px;top:3.5px" width="20" height="20" viewBox="0 0 20 20"><path d="M3 8.1 H8 M5.5 5.6 V10.6" stroke="#3a3a3a" stroke-width="1.6"/><ellipse cx="11.05" cy="9.9" rx="2.2" ry="1.35" transform="rotate(-45 11.05 9.9)" fill="#ddd" stroke="#6a6a6a" stroke-width="1"/><ellipse cx="7.6" cy="13.6" rx="2.2" ry="1.35" transform="rotate(-45 7.6 13.6)" fill="#ddd" stroke="#5a5a5a" stroke-width="1"/></svg></div><div class="a c " style="left:62.8px;width:116.7px"><span style="padding-left:17px">John Brown</span></div><div class="a c " style="left:179.5px;width:175.8px"><span style="padding-left:1px">j.brown@company.org</span></div><div class="a c ctr" style="left:355.3px;width:92.5px">Work</div><div class="a c ctr" style="left:447.8px;width:94.7px">$20/h</div><div class="a c " style="left:542.5px;width:142.5px"><span style="padding-left:2px">Manufacturing</span></div><div class="a c " style="left:685.0px;width:58.0px"><svg class="a" style="left:0.6px;top:8.5px" width="9" height="8" viewBox="0 0 9 8"><rect x="0.5" y="2" width="7" height="5" fill="#f0f0f0" opacity="0.8"/><rect x="0" y="0.2" width="7.6" height="1.8" fill="#9e1f24"/><rect x="2.9" y="3.6" width="1.8" height="1.8" fill="#5b8fe0"/></svg></div></div><div class="a row" style="top:99.14px"><div class="a c num" style="left:0.0px;width:39.8px">3</div><div class="a c " style="left:39.8px;width:23.0px"><svg class="a" style="left:-1.5px;top:3.5px" width="20" height="20" viewBox="0 0 20 20"><path d="M3 8.1 H8 M5.5 5.6 V10.6" stroke="#3a3a3a" stroke-width="1.6"/><ellipse cx="11.05" cy="9.9" rx="2.2" ry="1.35" transform="rotate(-45 11.05 9.9)" fill="#ddd" stroke="#6a6a6a" stroke-width="1"/><ellipse cx="7.6" cy="13.6" rx="2.2" ry="1.35" transform="rotate(-45 7.6 13.6)" fill="#ddd" stroke="#5a5a5a" stroke-width="1"/></svg></div><div class="a c " style="left:62.8px;width:116.7px"><span style="padding-left:17px">Mary Williams</span></div><div class="a c " style="left:179.5px;width:175.8px"><span style="padding-left:1px">m.willams@company.org</span></div><div class="a c ctr" style="left:355.3px;width:92.5px">Work</div><div class="a c ctr" style="left:447.8px;width:94.7px">$30/h</div><div class="a c " style="left:542.5px;width:142.5px"><span style="padding-left:2px">Marketing</span></div><div class="a c " style="left:685.0px;width:58.0px"><svg class="a" style="left:0.6px;top:8.5px" width="9" height="8" viewBox="0 0 9 8"><rect x="0.5" y="2" width="7" height="5" fill="#f0f0f0" opacity="0.8"/><rect x="0" y="0.2" width="7.6" height="1.8" fill="#9e1f24"/><rect x="2.9" y="3.6" width="1.8" height="1.8" fill="#5b8fe0"/></svg></div></div><div class="a row ev" style="top:129.46px"><div class="a c num" style="left:0.0px;width:39.8px">4</div><div class="a c " style="left:39.8px;width:23.0px"><svg class="a" style="left:-1.5px;top:3.5px" width="20" height="20" viewBox="0 0 20 20"><path d="M3 8.1 H8 M5.5 5.6 V10.6" stroke="#3a3a3a" stroke-width="1.6"/><ellipse cx="11.05" cy="9.9" rx="2.2" ry="1.35" transform="rotate(-45 11.05 9.9)" fill="#ddd" stroke="#6a6a6a" stroke-width="1"/><ellipse cx="7.6" cy="13.6" rx="2.2" ry="1.35" transform="rotate(-45 7.6 13.6)" fill="#ddd" stroke="#5a5a5a" stroke-width="1"/></svg></div><div class="a c " style="left:62.8px;width:116.7px"><span style="padding-left:17px">Robert Moore</span></div><div class="a c " style="left:179.5px;width:175.8px"><span style="padding-left:1px">ddsfs@ vbgnbg</span></div><div class="a c ctr" style="left:355.3px;width:92.5px">Work</div><div class="a c ctr" style="left:447.8px;width:94.7px">$25/h</div><div class="a c " style="left:542.5px;width:142.5px"><span style="padding-left:2px">Sales</span></div><div class="a c " style="left:685.0px;width:58.0px"><svg class="a" style="left:0.6px;top:8.5px" width="9" height="8" viewBox="0 0 9 8"><rect x="0.5" y="2" width="7" height="5" fill="#f0f0f0" opacity="0.8"/><rect x="0" y="0.2" width="7.6" height="1.8" fill="#9e1f24"/><rect x="2.9" y="3.6" width="1.8" height="1.8" fill="#5b8fe0"/></svg></div></div><div class="a row" style="top:159.78px"><div class="a c num" style="left:0.0px;width:39.8px">5</div><div class="a c " style="left:39.8px;width:23.0px"><svg class="a" style="left:-1.5px;top:3.5px" width="20" height="20" viewBox="0 0 20 20"><path d="M3 8.1 H8 M5.5 5.6 V10.6" stroke="#3a3a3a" stroke-width="1.6"/><ellipse cx="11.05" cy="9.9" rx="2.2" ry="1.35" transform="rotate(-45 11.05 9.9)" fill="#ddd" stroke="#6a6a6a" stroke-width="1"/><ellipse cx="7.6" cy="13.6" rx="2.2" ry="1.35" transform="rotate(-45 7.6 13.6)" fill="#ddd" stroke="#5a5a5a" stroke-width="1"/></svg></div><div class="a c " style="left:62.8px;width:116.7px"><span style="padding-left:17px">Patricia Jones</span></div><div class="a c " style="left:179.5px;width:175.8px"><span style="padding-left:1px">sdsgfd@fghkjk,</span></div><div class="a c ctr" style="left:355.3px;width:92.5px">Work</div><div class="a c ctr" style="left:447.8px;width:94.7px">$25/h</div><div class="a c " style="left:542.5px;width:142.5px"><span style="padding-left:2px">Product Support</span></div><div class="a c " style="left:685.0px;width:58.0px"><svg class="a" style="left:0.6px;top:8.5px" width="9" height="8" viewBox="0 0 9 8"><rect x="0.5" y="2" width="7" height="5" fill="#f0f0f0" opacity="0.8"/><rect x="0" y="0.2" width="7.6" height="1.8" fill="#9e1f24"/><rect x="2.9" y="3.6" width="1.8" height="1.8" fill="#5b8fe0"/></svg></div></div><div class="a row ev" style="top:190.10px"><div class="a c num" style="left:0.0px;width:39.8px">6</div><div class="a c " style="left:39.8px;width:23.0px"><svg class="a" style="left:-1.5px;top:3.5px" width="20" height="20" viewBox="0 0 20 20"><path d="M3 8.1 H8 M5.5 5.6 V10.6" stroke="#3a3a3a" stroke-width="1.6"/><ellipse cx="11.05" cy="9.9" rx="2.2" ry="1.35" transform="rotate(-45 11.05 9.9)" fill="#ddd" stroke="#6a6a6a" stroke-width="1"/><ellipse cx="7.6" cy="13.6" rx="2.2" ry="1.35" transform="rotate(-45 7.6 13.6)" fill="#ddd" stroke="#5a5a5a" stroke-width="1"/></svg></div><div class="a c " style="left:62.8px;width:116.7px"><span style="padding-left:17px">Linda Davis</span></div><div class="a c " style="left:179.5px;width:175.8px"><span style="padding-left:1px">tgth@thuilio</span></div><div class="a c ctr" style="left:355.3px;width:92.5px">Work</div><div class="a c ctr" style="left:447.8px;width:94.7px">$20/h</div><div class="a c " style="left:542.5px;width:142.5px"><span style="padding-left:2px">Local Service</span></div><div class="a c " style="left:685.0px;width:58.0px"><svg class="a" style="left:0.6px;top:8.5px" width="9" height="8" viewBox="0 0 9 8"><rect x="0.5" y="2" width="7" height="5" fill="#f0f0f0" opacity="0.8"/><rect x="0" y="0.2" width="7.6" height="1.8" fill="#9e1f24"/><rect x="2.9" y="3.6" width="1.8" height="1.8" fill="#5b8fe0"/></svg></div></div><div class="a row" style="top:220.42px"><div class="a c num" style="left:0.0px;width:39.8px">7</div><div class="a c " style="left:39.8px;width:23.0px"><svg class="a" style="left:-1.5px;top:3.5px" width="20" height="20" viewBox="0 0 20 20"><path d="M3 8.1 H8 M5.5 5.6 V10.6" stroke="#3a3a3a" stroke-width="1.6"/><ellipse cx="11.05" cy="9.9" rx="2.2" ry="1.35" transform="rotate(-45 11.05 9.9)" fill="#ddd" stroke="#6a6a6a" stroke-width="1"/><ellipse cx="7.6" cy="13.6" rx="2.2" ry="1.35" transform="rotate(-45 7.6 13.6)" fill="#ddd" stroke="#5a5a5a" stroke-width="1"/></svg></div><div class="a c " style="left:62.8px;width:116.7px"><span style="padding-left:17px">Richard Miller</span></div><div class="a c " style="left:179.5px;width:175.8px"><span style="padding-left:1px">project@company.com</span></div><div class="a c ctr" style="left:355.3px;width:92.5px">Work</div><div class="a c ctr" style="left:447.8px;width:94.7px">$35/h</div><div class="a c " style="left:542.5px;width:142.5px"><span style="padding-left:2px">Product Manager</span></div><div class="a c " style="left:685.0px;width:58.0px"><svg class="a" style="left:0.6px;top:8.5px" width="9" height="8" viewBox="0 0 9 8"><rect x="0.5" y="2" width="7" height="5" fill="#f0f0f0" opacity="0.8"/><rect x="0" y="0.2" width="7.6" height="1.8" fill="#9e1f24"/><rect x="2.9" y="3.6" width="1.8" height="1.8" fill="#5b8fe0"/></svg></div></div><div class="a row ev" style="top:250.74px"><div class="a c num" style="left:0.0px;width:39.8px">8</div><div class="a c " style="left:39.8px;width:23.0px"><svg class="a" style="left:-1.5px;top:3.5px" width="20" height="20" viewBox="0 0 20 20"><path d="M3 8.1 H8 M5.5 5.6 V10.6" stroke="#3a3a3a" stroke-width="1.6"/><ellipse cx="11.05" cy="9.9" rx="2.2" ry="1.35" transform="rotate(-45 11.05 9.9)" fill="#ddd" stroke="#6a6a6a" stroke-width="1"/><ellipse cx="7.6" cy="13.6" rx="2.2" ry="1.35" transform="rotate(-45 7.6 13.6)" fill="#ddd" stroke="#5a5a5a" stroke-width="1"/></svg></div><div class="a c " style="left:62.8px;width:116.7px"><span style="padding-left:17px">Thomas Wilson</span></div><div class="a c " style="left:179.5px;width:175.8px"><span style="padding-left:1px">project@company.com</span></div><div class="a c ctr" style="left:355.3px;width:92.5px">Work</div><div class="a c ctr" style="left:447.8px;width:94.7px">$25/h</div><div class="a c " style="left:542.5px;width:142.5px"><span style="padding-left:2px">Engineering</span></div><div class="a c " style="left:685.0px;width:58.0px"><svg class="a" style="left:0.6px;top:8.5px" width="9" height="8" viewBox="0 0 9 8"><rect x="0.5" y="2" width="7" height="5" fill="#f0f0f0" opacity="0.8"/><rect x="0" y="0.2" width="7.6" height="1.8" fill="#9e1f24"/><rect x="2.9" y="3.6" width="1.8" height="1.8" fill="#5b8fe0"/></svg></div></div><div class="a row sel" style="top:281.06px"><div class="a c num" style="left:0.0px;width:39.8px">9</div><div class="a c " style="left:39.8px;width:23.0px"><svg class="a" style="left:-1.5px;top:3.5px" width="20" height="20" viewBox="0 0 20 20"><path d="M3 8.1 H8 M5.5 5.6 V10.6" stroke="#3a3a3a" stroke-width="1.6"/><ellipse cx="11.05" cy="9.9" rx="2.2" ry="1.35" transform="rotate(-45 11.05 9.9)" fill="#ddd" stroke="#6a6a6a" stroke-width="1"/><ellipse cx="7.6" cy="13.6" rx="2.2" ry="1.35" transform="rotate(-45 7.6 13.6)" fill="#ddd" stroke="#5a5a5a" stroke-width="1"/></svg></div><div class="a c " style="left:62.8px;width:116.7px;background:#a4c3f7;box-shadow:inset 0 0 0 1.4px #5a8ce4;height:30.32px"><span style="padding-left:17px">Barbara Taylor</span></div><div class="a c " style="left:179.5px;width:175.8px"><span style="padding-left:1px">project@company.com</span></div><div class="a c ctr" style="left:355.3px;width:92.5px">Work</div><div class="a c ctr" style="left:447.8px;width:94.7px">$120/h</div><div class="a c " style="left:542.5px;width:142.5px"><span style="padding-left:2px">Engineering</span></div><div class="a c " style="left:685.0px;width:58.0px"><svg class="a" style="left:0.6px;top:8.5px" width="9" height="8" viewBox="0 0 9 8"><rect x="0.5" y="2" width="7" height="5" fill="#f0f0f0" opacity="0.8"/><rect x="0" y="0.2" width="7.6" height="1.8" fill="#9e1f24"/><rect x="2.9" y="3.6" width="1.8" height="1.8" fill="#5b8fe0"/></svg></div></div><div class="a row ev" style="top:311.38px"><div class="a c num" style="left:0.0px;width:39.8px">10</div><div class="a c " style="left:39.8px;width:23.0px"><svg class="a" style="left:-1.5px;top:3.5px" width="20" height="20" viewBox="0 0 20 20"><path d="M3 8.1 H8 M5.5 5.6 V10.6" stroke="#3a3a3a" stroke-width="1.6"/><ellipse cx="11.05" cy="9.9" rx="2.2" ry="1.35" transform="rotate(-45 11.05 9.9)" fill="#ddd" stroke="#6a6a6a" stroke-width="1"/><ellipse cx="7.6" cy="13.6" rx="2.2" ry="1.35" transform="rotate(-45 7.6 13.6)" fill="#ddd" stroke="#5a5a5a" stroke-width="1"/></svg></div><div class="a c " style="left:62.8px;width:116.7px"><span style="padding-left:17px">Andrew Anderson</span></div><div class="a c " style="left:179.5px;width:175.8px"><span style="padding-left:1px">project@company.com</span></div><div class="a c ctr" style="left:355.3px;width:92.5px">Work</div><div class="a c ctr" style="left:447.8px;width:94.7px">$25/h</div><div class="a c " style="left:542.5px;width:142.5px"><span style="padding-left:2px">Engineering</span></div><div class="a c " style="left:685.0px;width:58.0px"><svg class="a" style="left:0.6px;top:8.5px" width="9" height="8" viewBox="0 0 9 8"><rect x="0.5" y="2" width="7" height="5" fill="#f0f0f0" opacity="0.8"/><rect x="0" y="0.2" width="7.6" height="1.8" fill="#9e1f24"/><rect x="2.9" y="3.6" width="1.8" height="1.8" fill="#5b8fe0"/></svg></div></div><div class="a row" style="top:341.70px"><div class="a c num" style="left:0.0px;width:39.8px">11</div><div class="a c " style="left:39.8px;width:23.0px"><svg class="a" style="left:-1.5px;top:3.5px" width="20" height="20" viewBox="0 0 20 20"><path d="M3 8.1 H8 M5.5 5.6 V10.6" stroke="#3a3a3a" stroke-width="1.6"/><ellipse cx="11.05" cy="9.9" rx="2.2" ry="1.35" transform="rotate(-45 11.05 9.9)" fill="#ddd" stroke="#6a6a6a" stroke-width="1"/><ellipse cx="7.6" cy="13.6" rx="2.2" ry="1.35" transform="rotate(-45 7.6 13.6)" fill="#ddd" stroke="#5a5a5a" stroke-width="1"/></svg></div><div class="a c " style="left:62.8px;width:116.7px"><span style="padding-left:17px">Susan White</span></div><div class="a c " style="left:179.5px;width:175.8px"><span style="padding-left:1px">project@company.com</span></div><div class="a c ctr" style="left:355.3px;width:92.5px">Work</div><div class="a c ctr" style="left:447.8px;width:94.7px">$30/h</div><div class="a c " style="left:542.5px;width:142.5px"><span style="padding-left:2px">Marketing</span></div><div class="a c " style="left:685.0px;width:58.0px"><svg class="a" style="left:0.6px;top:8.5px" width="9" height="8" viewBox="0 0 9 8"><rect x="0.5" y="2" width="7" height="5" fill="#f0f0f0" opacity="0.8"/><rect x="0" y="0.2" width="7.6" height="1.8" fill="#9e1f24"/><rect x="2.9" y="3.6" width="1.8" height="1.8" fill="#5b8fe0"/></svg></div></div><div class="a row ev" style="top:372.02px"><div class="a c num" style="left:0.0px;width:39.8px">12</div><div class="a c " style="left:39.8px;width:23.0px"><svg class="a" style="left:-1.5px;top:3.5px" width="20" height="20" viewBox="0 0 20 20"><path d="M3 8.1 H8 M5.5 5.6 V10.6" stroke="#3a3a3a" stroke-width="1.6"/><ellipse cx="11.05" cy="9.9" rx="2.2" ry="1.35" transform="rotate(-45 11.05 9.9)" fill="#ddd" stroke="#6a6a6a" stroke-width="1"/><ellipse cx="7.6" cy="13.6" rx="2.2" ry="1.35" transform="rotate(-45 7.6 13.6)" fill="#ddd" stroke="#5a5a5a" stroke-width="1"/></svg></div><div class="a c " style="left:62.8px;width:116.7px"><span style="padding-left:17px">Karen Martin</span></div><div class="a c " style="left:179.5px;width:175.8px"><span style="padding-left:1px">project@company.com</span></div><div class="a c ctr" style="left:355.3px;width:92.5px">Work</div><div class="a c ctr" style="left:447.8px;width:94.7px">$30/h</div><div class="a c " style="left:542.5px;width:142.5px"><span style="padding-left:2px">Marketing</span></div><div class="a c " style="left:685.0px;width:58.0px"><svg class="a" style="left:0.6px;top:8.5px" width="9" height="8" viewBox="0 0 9 8"><rect x="0.5" y="2" width="7" height="5" fill="#f0f0f0" opacity="0.8"/><rect x="0" y="0.2" width="7.6" height="1.8" fill="#9e1f24"/><rect x="2.9" y="3.6" width="1.8" height="1.8" fill="#5b8fe0"/></svg></div></div><div class="a row" style="top:402.34px"><div class="a c num" style="left:0.0px;width:39.8px">13</div><div class="a c " style="left:39.8px;width:23.0px"><svg class="a" style="left:-1.5px;top:3.5px" width="20" height="20" viewBox="0 0 20 20"><path d="M3 8.1 H8 M5.5 5.6 V10.6" stroke="#3a3a3a" stroke-width="1.6"/><ellipse cx="11.05" cy="9.9" rx="2.2" ry="1.35" transform="rotate(-45 11.05 9.9)" fill="#ddd" stroke="#6a6a6a" stroke-width="1"/><ellipse cx="7.6" cy="13.6" rx="2.2" ry="1.35" transform="rotate(-45 7.6 13.6)" fill="#ddd" stroke="#5a5a5a" stroke-width="1"/></svg></div><div class="a c " style="left:62.8px;width:116.7px"><span style="padding-left:17px">William Jones</span></div><div class="a c " style="left:179.5px;width:175.8px"><span style="padding-left:1px">project@company.com</span></div><div class="a c ctr" style="left:355.3px;width:92.5px">Work</div><div class="a c ctr" style="left:447.8px;width:94.7px">$25/h</div><div class="a c " style="left:542.5px;width:142.5px"><span style="padding-left:2px">Sales</span></div><div class="a c " style="left:685.0px;width:58.0px"><svg class="a" style="left:0.6px;top:8.5px" width="9" height="8" viewBox="0 0 9 8"><rect x="0.5" y="2" width="7" height="5" fill="#f0f0f0" opacity="0.8"/><rect x="0" y="0.2" width="7.6" height="1.8" fill="#9e1f24"/><rect x="2.9" y="3.6" width="1.8" height="1.8" fill="#5b8fe0"/></svg></div></div><div class="a row ev" style="top:432.66px"><div class="a c num" style="left:0.0px;width:39.8px">14</div><div class="a c " style="left:39.8px;width:23.0px"><svg class="a" style="left:-1.5px;top:3.5px" width="20" height="20" viewBox="0 0 20 20"><path d="M3 8.1 H8 M5.5 5.6 V10.6" stroke="#3a3a3a" stroke-width="1.6"/><ellipse cx="11.05" cy="9.9" rx="2.2" ry="1.35" transform="rotate(-45 11.05 9.9)" fill="#ddd" stroke="#6a6a6a" stroke-width="1"/><ellipse cx="7.6" cy="13.6" rx="2.2" ry="1.35" transform="rotate(-45 7.6 13.6)" fill="#ddd" stroke="#5a5a5a" stroke-width="1"/></svg></div><div class="a c " style="left:62.8px;width:116.7px"><span style="padding-left:17px">Michael Smith</span></div><div class="a c " style="left:179.5px;width:175.8px"><span style="padding-left:1px">project@company.com</span></div><div class="a c ctr" style="left:355.3px;width:92.5px">Work</div><div class="a c ctr" style="left:447.8px;width:94.7px">$22/h</div><div class="a c " style="left:542.5px;width:142.5px"><span style="padding-left:2px">Sales</span></div><div class="a c " style="left:685.0px;width:58.0px"><svg class="a" style="left:0.6px;top:8.5px" width="9" height="8" viewBox="0 0 9 8"><rect x="0.5" y="2" width="7" height="5" fill="#f0f0f0" opacity="0.8"/><rect x="0" y="0.2" width="7.6" height="1.8" fill="#9e1f24"/><rect x="2.9" y="3.6" width="1.8" height="1.8" fill="#5b8fe0"/></svg></div></div><div class="a row" style="top:462.98px"><div class="a c num" style="left:0.0px;width:39.8px">15</div><div class="a c " style="left:39.8px;width:23.0px"><svg class="a" style="left:-1.5px;top:3.5px" width="20" height="20" viewBox="0 0 20 20"><path d="M3 8.1 H8 M5.5 5.6 V10.6" stroke="#3a3a3a" stroke-width="1.6"/><ellipse cx="11.05" cy="9.9" rx="2.2" ry="1.35" transform="rotate(-45 11.05 9.9)" fill="#ddd" stroke="#6a6a6a" stroke-width="1"/><ellipse cx="7.6" cy="13.6" rx="2.2" ry="1.35" transform="rotate(-45 7.6 13.6)" fill="#ddd" stroke="#5a5a5a" stroke-width="1"/></svg></div><div class="a c " style="left:62.8px;width:116.7px"><span style="padding-left:17px">David Harris</span></div><div class="a c " style="left:179.5px;width:175.8px"><span style="padding-left:1px">project@company.com</span></div><div class="a c ctr" style="left:355.3px;width:92.5px">Work</div><div class="a c ctr" style="left:447.8px;width:94.7px">$23/h</div><div class="a c " style="left:542.5px;width:142.5px"><span style="padding-left:2px">Product Support</span></div><div class="a c " style="left:685.0px;width:58.0px"><svg class="a" style="left:0.6px;top:8.5px" width="9" height="8" viewBox="0 0 9 8"><rect x="0.5" y="2" width="7" height="5" fill="#f0f0f0" opacity="0.8"/><rect x="0" y="0.2" width="7.6" height="1.8" fill="#9e1f24"/><rect x="2.9" y="3.6" width="1.8" height="1.8" fill="#5b8fe0"/></svg></div></div></div><div class="a" style="left:247px;top:562px;width:742px;height:17px;background:#ececec;border-top:1px solid #c9c9c9"></div><div class="a" style="left:245px;top:72px;width:1px;height:507px;background:#d2d2d2"></div><div class="a" style="left:257.2px;top:563px;width:19px;height:16px;background:#f4f4f4;border-left:1px solid #cfcfcf;border-right:1px solid #cfcfcf"></div><div class="a" style="left:276.2px;top:563px;width:18.5px;height:16px;background:#f4f4f4;border-right:1px solid #cfcfcf"></div><div class="a" style="left:262px;top:571px;width:11px;height:1.3px;background:#222"></div><div class="a" style="left:266.8px;top:566px;width:1.3px;height:11px;background:#222"></div><div class="a" style="left:281px;top:571px;width:11px;height:1.3px;background:#222"></div><div id="rp" class="a"><div class="a" style="left:1px;top:8px;width:284px;height:28px;background:#5b9ff1;border-bottom:1.2px solid #3f87ec;color:#fff;font-weight:bold;font-size:11px;text-align:center;line-height:28px;padding-left:0">Resource</div><div class="a" style="left:2.8px;top:46.4px;width:0;height:0;border-top:6.6px solid #7d7d7d;border-left:4.2px solid transparent;border-right:4.2px solid transparent"></div><div class="a" style="left:21px;top:43px;font-size:11px;font-weight:bold;color:#111">Info</div><div class="a" style="left:1px;top:54px;width:279px;height:1px;background:#d3d3d3"></div><div class="a fl" style="top:64.1px">Name:</div><div class="a fl" style="top:87.1px">Type:</div><div class="a fl" style="top:110.1px">Cost:</div><div class="a fl" style="top:134.6px">Group:</div><div class="a fl" style="top:160.1px">E-Mail:</div><div class="a fl" style="top:183.1px">Marker:</div><div class="a fld" style="top:61.5px">Barbara Taylor</div><div class="a pop" style="top:85.2px">Work<div class="a pbtn"></div><svg class="a" style="right:0;top:0" width="14" height="17" viewBox="0 0 14 17"><path d="M4.3 6.8 L7 4.2 L9.7 6.8 M4.3 10.2 L7 12.8 L9.7 10.2" fill="none" stroke="#fff" stroke-width="1.5"/></svg></div><div class="a fld" style="top:108.3px;width:53px">$120.00</div><div class="a" style="left:156.5px;top:108.5px;width:10px;height:17px;background:#fff;border-radius:4px;box-shadow:0 0.5px 1px #9a9a9a,0 0 0 0.5px #c9c9c9"></div><svg class="a" style="left:156.5px;top:108.5px" width="10" height="17" viewBox="0 0 10 17"><path d="M2.6 6.2 L5 3.6 L7.4 6.2 M2.6 10.8 L5 13.4 L7.4 10.8" fill="none" stroke="#333" stroke-width="1.3"/></svg><div class="a pop" style="left:174.5px;width:83px;top:108.5px">Per hour<div class="a pbtn"></div><svg class="a" style="right:0;top:0" width="14" height="17" viewBox="0 0 14 17"><path d="M4.3 6.8 L7 4.2 L9.7 6.8 M4.3 10.2 L7 12.8 L9.7 10.2" fill="none" stroke="#fff" stroke-width="1.5"/></svg></div><div class="a pop" style="top:131.3px;height:19.5px;font-size:12.7px;line-height:23px;padding-left:3px">Engineering<div class="a pbtn" style="width:17px;height:19.5px"></div><svg class="a" style="right:1px;top:1.5px" width="14" height="17" viewBox="0 0 14 17"><path d="M3.8 7.2 L7.2 10.4 L10.6 7.2" fill="none" stroke="#fff" stroke-width="1.6"/></svg></div><div class="a fld" style="top:157.0px">project@company.com</div><div class="a pop" style="top:180.9px">No Marker<div class="a pbtn"></div><svg class="a" style="right:0;top:0" width="14" height="17" viewBox="0 0 14 17"><path d="M4.3 6.8 L7 4.2 L9.7 6.8 M4.3 10.2 L7 12.8 L9.7 10.2" fill="none" stroke="#fff" stroke-width="1.5"/></svg></div></div></body></html>
